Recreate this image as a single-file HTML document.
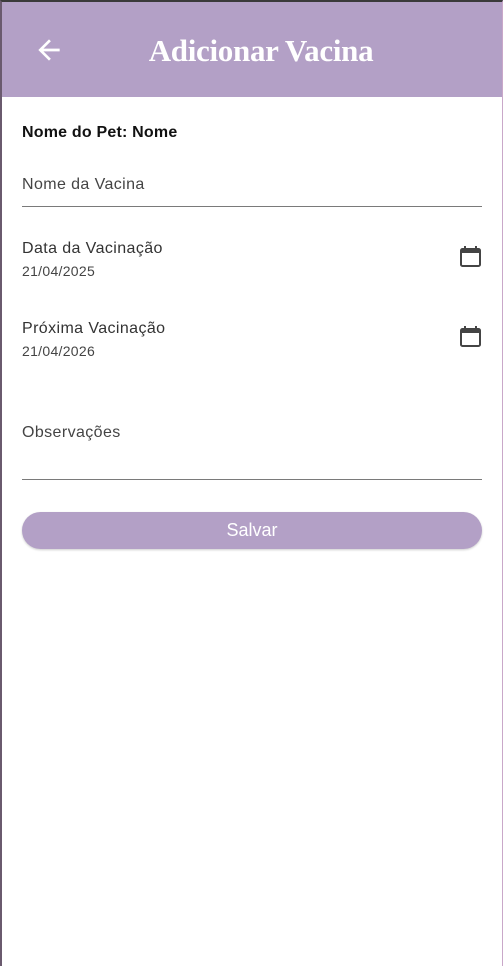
<!DOCTYPE html>
<html><head><meta charset="utf-8"><style>
*{margin:0;padding:0;box-sizing:border-box}
html,body{width:503px;height:966px;overflow:hidden;background:#fff}
body{position:relative;font-family:"Liberation Sans",sans-serif}
.frame{position:absolute;inset:0;border-left:2px solid #6a5a6e;border-right:1px solid #c9a8c9;border-top:2px solid #3a3a3a}
.hdr{position:absolute;left:2px;top:2px;right:1px;height:95px;background:#b3a0c6}
.title{position:absolute;left:0;right:0;top:31px;text-align:center;font-family:"Liberation Serif",serif;font-weight:bold;font-size:31px;color:#fff;padding-left:18px;letter-spacing:-0.3px}
.t{position:absolute;left:22px;color:#333}
.line{position:absolute;left:22px;width:460px;height:1px;background:#7a7a7a}
.cal{position:absolute;left:460px;width:21px;height:22px}
.btn{position:absolute;left:22px;top:512px;width:460px;height:37px;border-radius:19px;background:#b3a0c6;color:#fff;font-size:18px;text-align:center;line-height:37px;box-shadow:0 1px 2px rgba(0,0,0,.2)}
</style></head><body>
<div class="hdr">
<svg style="position:absolute;left:31px;top:32px" width="32" height="32" viewBox="0 0 24 24"><path d="M20 11H7.83l5.59-5.59L12 4l-8 8 8 8 1.41-1.41L7.83 13H20v-2z" fill="#fff"/></svg>
<div class="title">Adicionar Vacina</div>
</div>
<div class="t" style="top:124px;font-weight:bold;font-size:16px;color:#111;letter-spacing:.2px">Nome do Pet: Nome</div>
<div class="t" style="top:176px;font-size:16px;color:#444;letter-spacing:.4px">Nome da Vacina</div>
<div class="line" style="top:206px"></div>
<div class="t" style="top:240px;font-size:16px;color:#333;letter-spacing:.4px">Data da Vacinação</div>
<div class="t" style="top:263px;font-size:14px;color:#444;letter-spacing:.3px">21/04/2025</div>
<svg class="cal" style="top:245px" viewBox="0 0 21 22"><rect x="1" y="4" width="19" height="17" rx="1.5" fill="none" stroke="#444" stroke-width="2"/><rect x="1" y="4" width="19" height="4" fill="#444"/><rect x="4" y="1" width="2" height="4" fill="#444"/><rect x="15" y="1" width="2" height="4" fill="#444"/></svg>
<div class="t" style="top:320px;font-size:16px;color:#333;letter-spacing:.4px">Próxima Vacinação</div>
<div class="t" style="top:343px;font-size:14px;color:#444;letter-spacing:.3px">21/04/2026</div>
<svg class="cal" style="top:325px" viewBox="0 0 21 22"><rect x="1" y="4" width="19" height="17" rx="1.5" fill="none" stroke="#444" stroke-width="2"/><rect x="1" y="4" width="19" height="4" fill="#444"/><rect x="4" y="1" width="2" height="4" fill="#444"/><rect x="15" y="1" width="2" height="4" fill="#444"/></svg>
<div class="t" style="top:424px;font-size:16px;color:#444;letter-spacing:.4px">Observações</div>
<div class="line" style="top:479px"></div>
<div class="btn">Salvar</div>
<div class="frame"></div>
</body></html>
